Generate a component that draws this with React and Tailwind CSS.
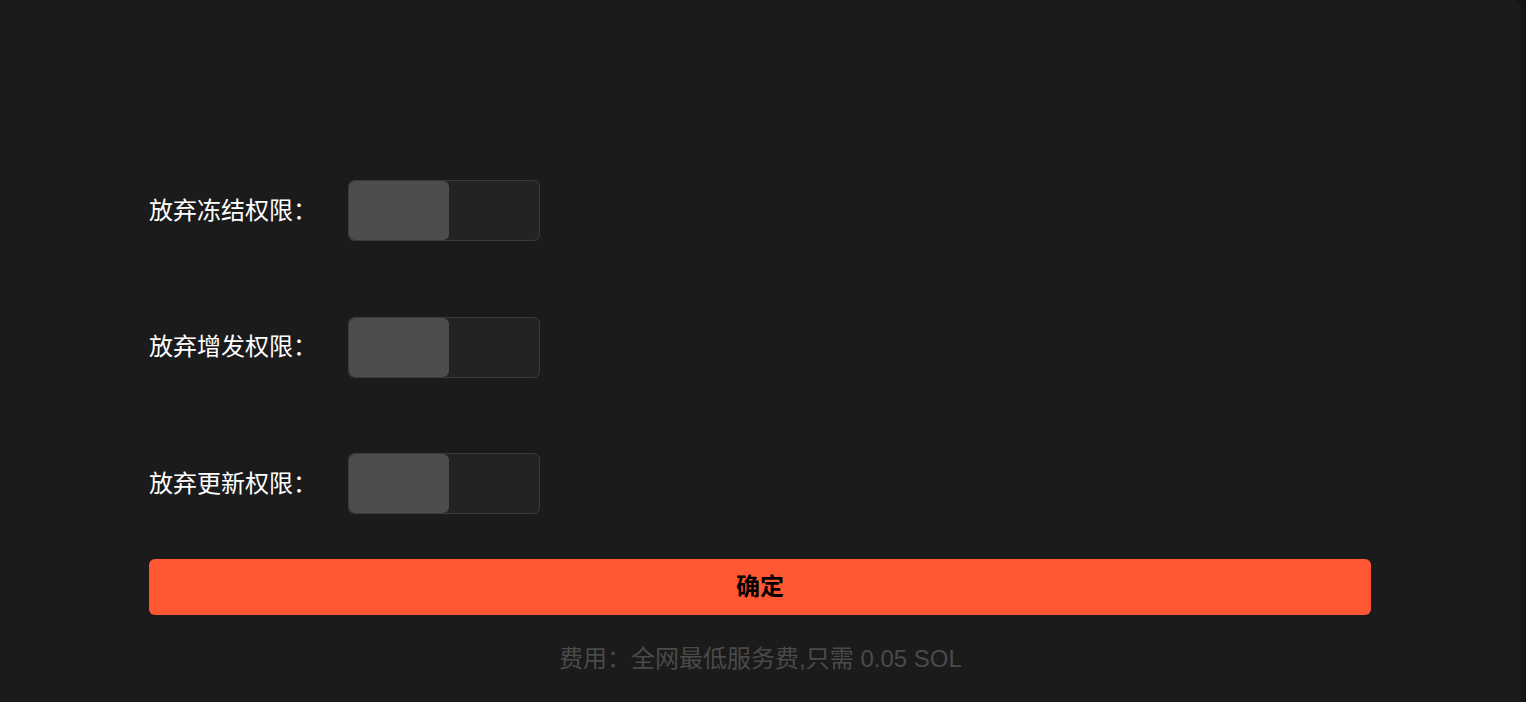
import { useState } from 'react';

const font = { fontFamily: '"Liberation Sans", "Noto Sans CJK SC", sans-serif' };

function Toggle({ on, onChange }) {
    return (
        <button
            onClick={() => onChange(!on)}
            className={`flex h-[61px] w-[192px] rounded-md border border-[#3a3a3a] bg-[#232323] ${on ? 'justify-end' : 'justify-start'}`}
        >
            <span className="h-full w-[100px] rounded-md bg-[#4d4d4d]" />
        </button>
    );
}

export default function App() {
    const [perms, setPerms] = useState({ freeze: false, mint: false, update: false });

    const rows = [
        { id: 'freeze', label: '放弃冻结权限：' },
        { id: 'mint', label: '放弃增发权限：' },
        { id: 'update', label: '放弃更新权限：' }
    ];

    return (
        <div className="min-h-screen bg-[#141414]" style={font}>
            <div className="w-[1521px] min-h-[702px] rounded-tr-lg bg-[#1b1b1b] px-[149px] pt-[180px]">
                <div className="flex flex-col gap-[75.5px]">
                    {rows.map(r => (
                        <div key={r.id} className="flex items-center">
                            <label className="w-[199px] text-[24px] text-white">{r.label}</label>
                            <Toggle on={perms[r.id]} onChange={v => setPerms({ ...perms, [r.id]: v })} />
                        </div>
                    ))}
                </div>

                <button className="mt-[45px] h-[56px] w-[1222px] rounded-md bg-[#ff5733] text-[24px] font-bold text-black">
                    确定
                </button>

                <div className="mt-[30px] text-center text-[24px] leading-[28px] text-[#4a4a4a]">
                    费用：全网最低服务费,只需 0.05 SOL
                </div>
            </div>
        </div>
    );
}
